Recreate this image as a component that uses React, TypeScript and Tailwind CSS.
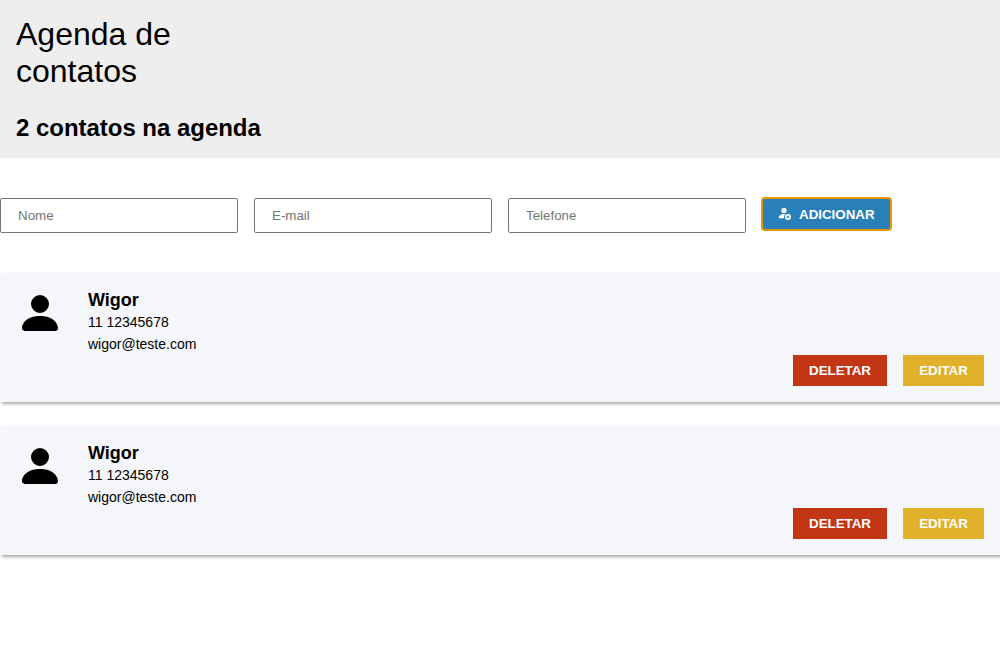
import { BsPersonFill, BsPersonFillAdd } from "react-icons/bs";

const contacts = [
  { id: 1, name: "Wigor", phone: "11 12345678", email: "wigor@teste.com" },
  { id: 2, name: "Wigor", phone: "11 12345678", email: "wigor@teste.com" },
];

const fields = ["Nome", "E-mail", "Telefone"];

export default function App() {
  return (
    <div className="min-h-[660px] overflow-x-hidden bg-white font-['Liberation_Sans',Arial,sans-serif] text-black">
      <header className="h-[158px] bg-[#eeeeee] px-4 pt-4">
        <h1 className="w-[200px] text-[32px] leading-[37px]">Agenda de contatos</h1>
        <h2 className="mt-6 text-2xl leading-7 font-bold tracking-[-0.03px]">2 contatos na agenda</h2>
      </header>
      <form className="mt-10 flex items-start" onSubmit={(e) => e.preventDefault()}>
        {fields.map((f) => (
          <input
            key={f}
            placeholder={f}
            className="mr-4 h-[35px] w-[238px] rounded-[2px] border border-[#767676] bg-white px-[17px] text-[13.333px] placeholder:text-[#757575]"
          />
        ))}
        <button className="-mt-px -ml-px flex h-[34px] w-[131px] items-start rounded-[4px] border-2 border-[#e59700] bg-[#2980b9] pt-[7px] pl-3.5 text-[13.333px] leading-4 font-bold text-white">
          <BsPersonFillAdd className="mr-2 size-3.5 shrink-0" />
          <span className="pt-px">ADICIONAR</span>
        </button>
      </form>
      <ul className="mt-10 flex flex-col gap-6">
        {contacts.map((c) => (
          <li
            key={c.id}
            className="flex h-[129px] justify-between bg-[#f5f6fa] p-4 shadow-[2px_2px_3px_#a5aaa5]"
          >
            <div className="flex gap-6">
              <BsPersonFill className="size-12" />
              <div>
                <h3 className="text-lg leading-[22px] font-bold">{c.name}</h3>
                <p className="text-sm leading-[22px]">{c.phone}</p>
                <p className="text-sm leading-[22px]">{c.email}</p>
              </div>
            </div>
            <div className="flex items-end gap-4">
              <button className="h-[31px] w-[94px] bg-[#c23616] text-[13.333px] font-bold text-white">
                DELETAR
              </button>
              <button className="h-[31px] w-[81px] bg-[#e1b12c] text-[13.333px] font-bold text-white">
                EDITAR
              </button>
            </div>
          </li>
        ))}
      </ul>
    </div>
  );
}
